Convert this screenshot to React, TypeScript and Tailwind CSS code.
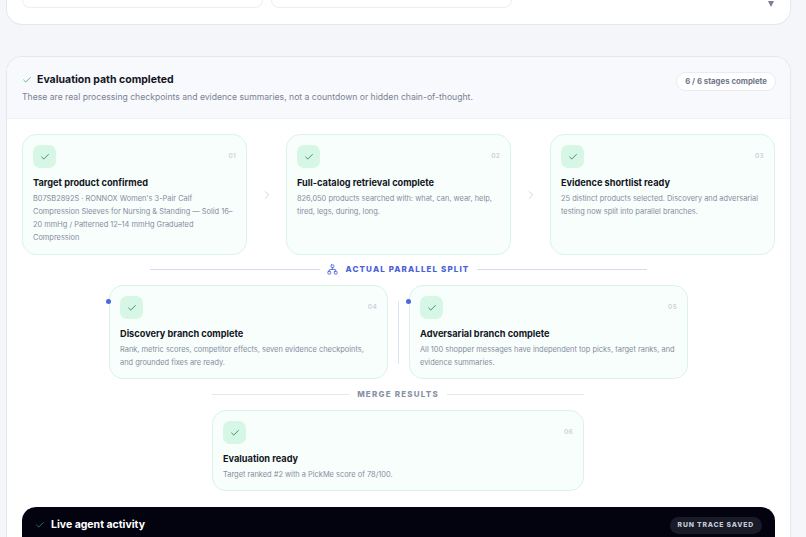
import React from "react";
import { Check, ChevronRight, Network } from "lucide-react";

function Stage({ n, title, text, className = "" }: { n: string; title: string; text: string; className?: string }) {
  return (
    <div className={`rounded-[14px] border border-[#d9f3e9] bg-[#f8fefb] pt-[10px] pr-[10px] pb-2 pl-[10px] ${className}`}>
      <div className="flex items-center justify-between">
        <div className="flex h-[23px] w-[23px] items-center justify-center rounded-[7px] bg-[#d6f7e6]">
          <Check className="h-[10px] w-[10px] text-[#2c7a57]" strokeWidth={2} />
        </div>
        <span className="text-[6.5px] font-semibold tracking-[0.04em] text-[#ccd1dc]">{n}</span>
      </div>
      <div className="mt-[8px] text-[9.2px] leading-[14px] font-bold text-[#12151f]">{title}</div>
      <div className="mt-[2px] text-[7.43px] leading-[13px] text-[#868da1]">{text}</div>
    </div>
  );
}

function Arrow() {
  return (
    <div className="flex w-[39px] shrink-0 items-center justify-center">
      <ChevronRight className="h-[14px] w-[14px] text-[#cdd2dc]" strokeWidth={1.5} />
    </div>
  );
}

export default function App() {
  return (
    <div className="h-[537px] overflow-hidden bg-[#f5f6fa] font-['Inter','Liberation_Sans',sans-serif]">
      <div className="mr-[15px] ml-[6px] h-[25px] rounded-b-[16px] border-x border-b border-[#e4e7ee] bg-white pl-[15px]">
        <div className="flex items-start gap-2">
          <div className="h-2 w-[241px] rounded-b-[12px] border-x border-b border-[#eceef3] bg-white" />
          <div className="h-2 w-[241px] rounded-b-[12px] border-x border-b border-[#eceef3] bg-white" />
          <div className="flex flex-1 justify-end pt-[1px] pr-[16px]">
            <div className="h-0 w-0 border-x-[3.5px] border-t-[6px] border-x-transparent border-t-[#7b7f8a]" />
          </div>
        </div>
      </div>

      <div className="mt-[31px] mr-[15px] ml-[6px] h-[490px] overflow-hidden rounded-t-[16px] border-x border-t border-[#e4e7ee] bg-white">
        <div className="flex h-[62px] items-start justify-between border-b border-[#f2f3f7] bg-[#f8f9fc] pt-[15px] pr-[14px] pl-[15px]">
          <div className="pt-[1px]">
            <div className="flex items-center gap-[5px]">
              <Check className="h-[10px] w-[10px] text-[#3f9c74]" strokeWidth={1.75} />
              <span className="text-[10.5px] leading-[14px] font-bold text-[#12151f]">Evaluation path completed</span>
            </div>
            <div className="mt-[3px] text-[8.65px] leading-[14px] text-[#7a8194]">
              These are real processing checkpoints and evidence summaries, not a countdown or hidden chain-of-thought.
            </div>
          </div>
          <div className="flex h-[19px] items-center rounded-full border border-[#e9ebf1] bg-white px-2 text-[7.8px] font-bold text-[#6f7689]">
            6 / 6 stages complete
          </div>
        </div>

        <div className="px-[15px] pt-[15px]">
          <div className="flex h-[121px]">
            <Stage className="w-[225px] shrink-0" n="01" title="Target product confirmed" text="B07SB2892S · RONNOX Women's 3-Pair Calf Compression Sleeves for Nursing & Standing — Solid 16–20 mmHg / Patterned 12–14 mmHg Graduated Compression" />
            <Arrow />
            <Stage className="w-[225px] shrink-0" n="02" title="Full-catalog retrieval complete" text="826,050 products searched with: what, can, wear, help, tired, legs, during, long." />
            <Arrow />
            <Stage className="w-[225px] shrink-0" n="03" title="Evidence shortlist ready" text="25 distinct products selected. Discovery and adversarial testing now split into parallel branches." />
          </div>

          <div className="mt-[8px] ml-[128px] flex h-[12px] w-[497px] items-center">
            <div className="h-px flex-1 bg-[#d4dbf0]" />
            <div className="flex items-center gap-2 pr-2 pl-[7px]">
              <Network className="h-[11px] w-[11px] text-[#4a5fd8]" strokeWidth={1.75} />
              <span className="text-[8px] font-extrabold tracking-[0.14em] text-[#4a5fd8]">ACTUAL PARALLEL SPLIT</span>
            </div>
            <div className="h-px flex-1 bg-[#d4dbf0]" />
          </div>

          <div className="mt-[10px] ml-[87px] flex h-[94px] w-[579px]">
            <div className="relative w-[279px] shrink-0">
              <div className="absolute top-[14px] -left-[3px] h-[5px] w-[5px] rounded-full bg-[#4a68e0]" />
              <Stage className="h-full" n="04" title="Discovery branch complete" text="Rank, metric scores, competitor effects, seven evidence checkpoints, and grounded fixes are ready." />
            </div>
            <div className="flex w-[21px] shrink-0 items-center justify-center">
              <div className="h-[63px] w-px bg-[#dde3f5]" />
            </div>
            <div className="relative w-[279px] shrink-0">
              <div className="absolute top-[14px] -left-[3px] h-[5px] w-[5px] rounded-full bg-[#4a68e0]" />
              <Stage className="h-full" n="05" title="Adversarial branch complete" text="All 100 shopper messages have independent top picks, target ranks, and evidence summaries." />
            </div>
          </div>

          <div className="mt-[9px] ml-[190px] flex h-[12px] w-[372px] items-center">
            <div className="h-px flex-1 bg-[#e4e7ee]" />
            <span className="px-2 text-[8px] font-extrabold tracking-[0.15em] text-[#8a92a8]">MERGE RESULTS</span>
            <div className="h-px flex-1 bg-[#e4e7ee]" />
          </div>

          <Stage className="mt-[10px] ml-[190px] h-[81px] w-[372px]" n="06" title="Evaluation ready" text="Target ranked #2 with a PickMe score of 78/100." />

          <div className="mt-[16px] flex h-[60px] w-[753px] items-start justify-between rounded-t-[14px] bg-[#03030f] pt-[11px] pr-[13px] pl-[13px]">
            <div className="flex items-center gap-[6px]">
              <Check className="h-[10px] w-[10px] text-[#3f9c74]" strokeWidth={1.75} />
              <span className="text-[10.5px] leading-[14px] font-bold text-white">Live agent activity</span>
            </div>
            <div className="-mt-[1px] flex h-[17px] items-center rounded-full bg-[#1a1b29] px-2 text-[6.8px] font-extrabold tracking-[0.12em] text-[#c5c9d6]">
              RUN TRACE SAVED
            </div>
          </div>
        </div>
      </div>
    </div>
  );
}
